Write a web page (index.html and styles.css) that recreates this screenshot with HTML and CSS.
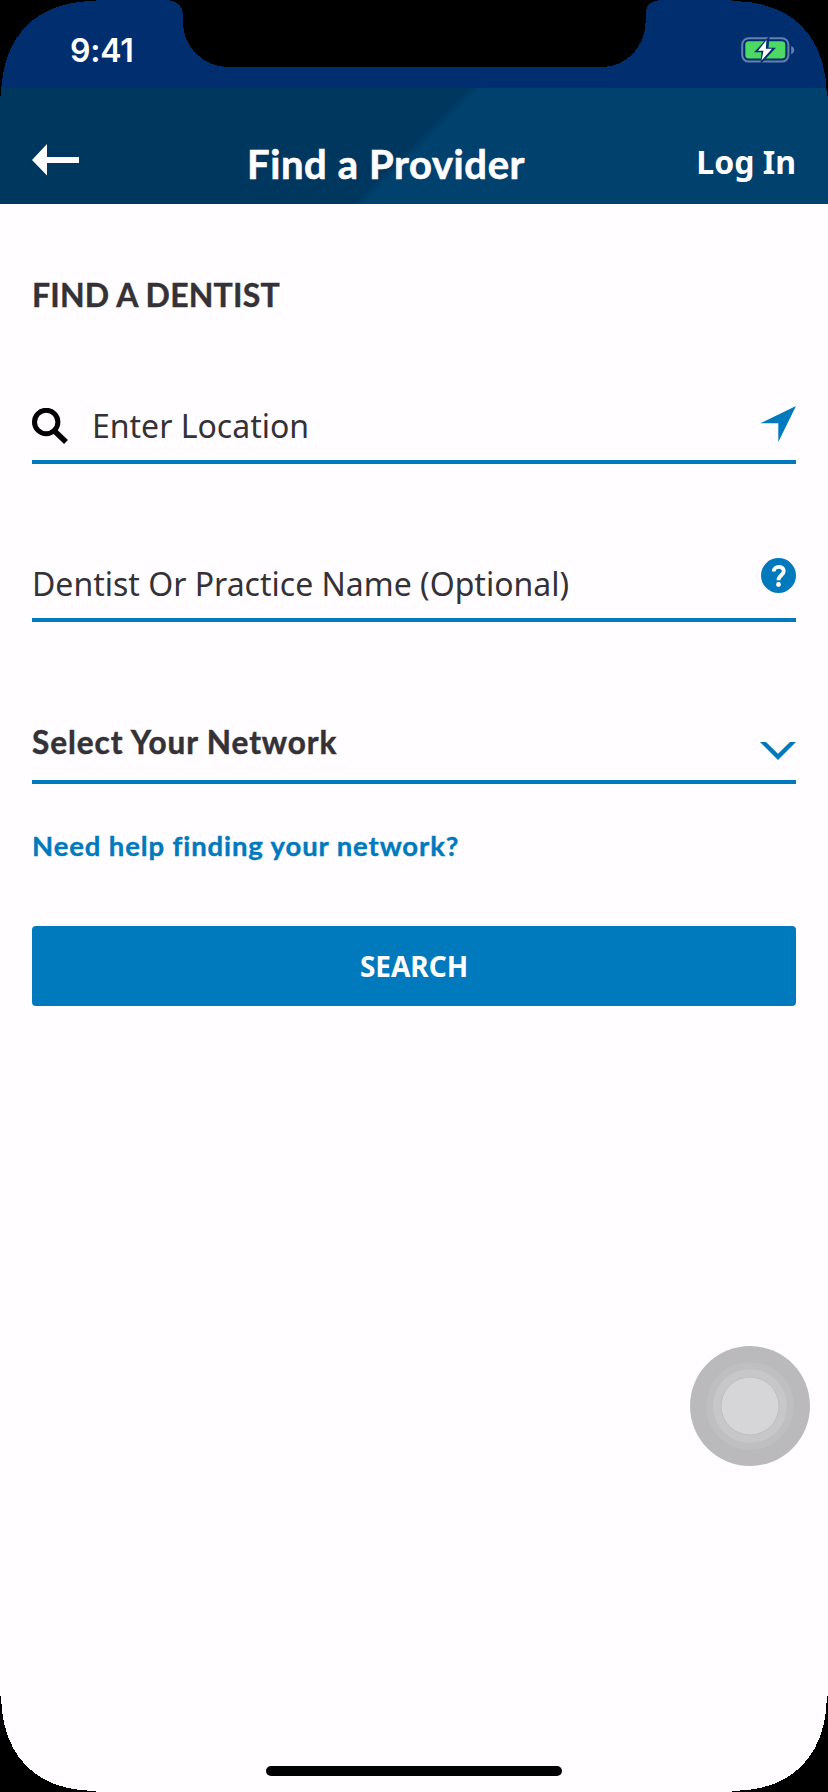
FILE: index.html
```html
<!DOCTYPE html>
<html lang="en">
<head>
<meta charset="utf-8">
<title>Find a Provider</title>
<link rel="stylesheet" href="styles.css">
</head>
<body>
<div class="phone">
  <div class="status-bar">
    <span class="time">9:41</span>
    <svg class="battery" width="54" height="28" viewBox="0 0 54 28">
      <rect x="1.2" y="2.2" width="46.2" height="23.4" rx="6.5" fill="none" stroke="#6480ad" stroke-width="2"/>
      <rect x="4.3" y="5.3" width="40" height="17.2" rx="3.5" fill="#4cd964"/>
      <path d="M50.2 10v8.2c4-1.5 4-6.700 0-8.200z" fill="#6480ad"/>
      <path d="M27.500 1L13 16.200h7.500L19.500 28 35 11.800h-7.500L28.500 1z" fill="#002e6e"/>
      <path d="M25.500 4L17 14.800h5.500L20.500 24.500 31 12.800h-6.200z" fill="#fff"/>
    </svg>
  </div>
  <header class="app-header">
    <svg class="back" width="48" height="32" viewBox="0 0 48 32"><path d="M0 16L15 0v13h32v6H15v12.500z" fill="#fffdff"/></svg>
    <h1 class="title">Find a Provider</h1>
    <a class="login">Log In</a>
  </header>
  <main class="content">
    <h2 class="section-title">FIND A DENTIST</h2>
    <div class="field location">
      <svg class="search-icon" width="37" height="37" viewBox="0 0 37 37"><circle cx="14.200" cy="14" r="11.700" fill="none" stroke="#000" stroke-width="5"/><path d="M22.500 23L34 34" stroke="#000" stroke-width="5.500"/></svg>
      <span class="placeholder">Enter Location</span>
      <svg class="locate-icon" width="36" height="36" viewBox="0 0 36 36"><path d="M36 0L0.500 17.300H18.300V36z" fill="#007abd"/></svg>
    </div>
    <div class="field name">
      <span class="placeholder">Dentist Or Practice Name (Optional)</span>
      <svg class="help-icon" width="35" height="35" viewBox="0 0 35 35"><circle cx="17.500" cy="17.500" r="17.500" fill="#007abd"/><path d="M12.700 13.500C12.500 7.500 22.800 7.400 22.800 13c0 4.300-5.300 4.200-5.300 9.300" fill="none" stroke="#fff" stroke-width="3.800"/><circle cx="17.500" cy="26.500" r="2.400" fill="#fff"/></svg>
    </div>
    <div class="field network">
      <span class="select-label">Select Your Network</span>
      <svg class="chevron" width="36" height="18" viewBox="0 0 36 18"><path d="M0 0h6l12 11.800L30 0h6L18 18z" fill="#007abd"/></svg>
    </div>
    <a class="help-link">Need help finding your network?</a>
    <button class="search-button">SEARCH</button>
  </main>
  <svg class="touch" width="120" height="120" viewBox="0 0 120 120">
    <circle cx="60" cy="60" r="60" fill="#bab9bb"/>
    <circle cx="60" cy="60" r="44" fill="#bfbec0"/>
    <circle cx="60" cy="60" r="37" fill="#c7c6c8"/>
    <circle cx="60" cy="60" r="29" fill="#d6d5d7" stroke="#bfbec0" stroke-width="1"/>
  </svg>
  <div class="home-bar"></div>
  <svg class="bezel" width="828" height="1792" viewBox="0 0 828 1792">
    <path d="M0 0V96H1C2 36 36 1 96 1V0Z"/>
    <path d="M828 0V96H827C826 36 792 1 732 1V0Z"/>
    <path d="M0 1792V1696H1C2 1756 36 1791 96 1791V1792Z"/>
    <path d="M828 1792V1696H827C826 1756 792 1791 732 1791V1792Z"/>
    <path d="M166 0Q183 1 183 16V23C183 47 204 67 228 67H602C626 67 645 47 645.500 23L646 12Q646 1 662 0Z"/>
  </svg>
</div>
</body>
</html>
```
FILE: styles.css
```css
* { box-sizing: border-box; }
body { margin: 0; }
h1, h2 { margin: 0; }
svg { display: block; flex: none; }
.phone {
  position: relative;
  width: 828px;
  height: 1792px;
  overflow: hidden;
  background: #fffdff;
  color: #343236;
  font-family: "Noto Sans", sans-serif;
}
.status-bar {
  display: flex;
  justify-content: space-between;
  height: 88px;
  padding: 31px 33px 0 70px;
  background: #002e6e;
}
.time {
  color: #fff;
  font: 600 32px/40px Inter, sans-serif;
  letter-spacing: -0.2px;
}
.battery { margin-top: 5px; }
.app-header {
  display: flex;
  height: 116px;
  padding: 0 32px;
  background: linear-gradient(135deg, #00375f 0%, #00375f 49.600%, #00416e 50.800%, #00416e 100%);
  color: #fffdff;
}
.back { margin-top: 56px; }
.title {
  margin: 52px 0 0 167px;
  font: 700 40px/48px Lato, sans-serif;
  letter-spacing: 0.6px;
  -webkit-text-stroke: 0.6px;
  white-space: nowrap;
}
.login {
  margin: 52px 0 0 auto;
  font-weight: 700;
  font-size: 32px;
  line-height: 44px;
}
.content { padding: 69px 32px 0; }
.section-title {
  font: 700 32px/44px Lato, sans-serif;
  letter-spacing: 0.2px;
  -webkit-text-stroke: 0.4px;
}
.field {
  display: flex;
  border-bottom: 4px solid #007abd;
}
.field > svg:last-child { margin-left: auto; }
.placeholder {
  font-size: 32px;
  line-height: 44px;
  white-space: nowrap;
}
.location { height: 64px; margin-top: 83px; }
.location .placeholder { margin: 4px 0 0 23px; }
.search-icon { margin-top: 8px; }
.locate-icon { margin-top: 6px; }
.name { height: 158px; padding-top: 98px; }
.help-icon { margin-top: -4px; }
.network { height: 162px; padding-top: 98px; }
.select-label {
  font: 700 31.500px/44px Lato, sans-serif;
  letter-spacing: 0.95px;
  -webkit-text-stroke: 0.5px;
  white-space: nowrap;
}
.chevron { margin-top: 22px; }
.help-link {
  display: block;
  margin-top: 44px;
  color: #007abd;
  font: 700 27.500px/36px Lato, sans-serif;
  letter-spacing: 0.88px;
  -webkit-text-stroke: 0.4px;
  white-space: nowrap;
}
.search-button {
  display: block;
  width: 100%;
  height: 80px;
  margin-top: 62px;
  padding: 0;
  border: 0;
  border-radius: 4px;
  background: #007abd;
  color: #fff;
  font: 700 28px/40px "Noto Sans", sans-serif;
}
.touch { position: absolute; left: 690px; top: 1346px; }
.home-bar {
  position: absolute;
  left: 266px;
  top: 1766px;
  width: 296px;
  height: 10px;
  border-radius: 5px;
  background: #000;
}
.bezel { position: absolute; left: 0; top: 0; shape-rendering: crispEdges; }
```
